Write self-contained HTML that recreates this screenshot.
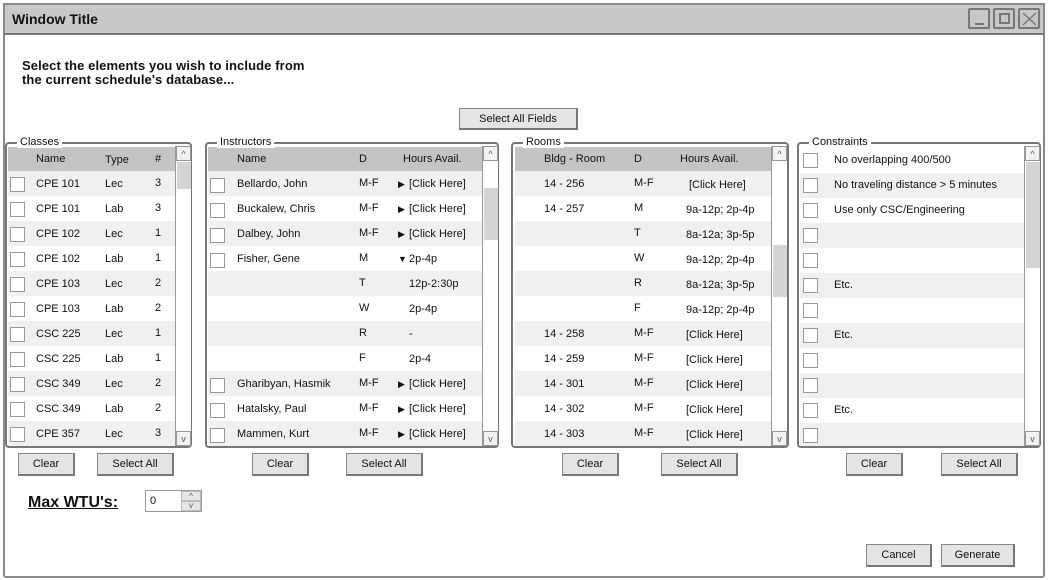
<!DOCTYPE html>
<html><head><meta charset="utf-8"><style>
*{box-sizing:border-box;margin:0;padding:0}
body{width:1050px;height:580px;background:#fff;font-family:"Liberation Sans",Arial,sans-serif;font-size:11px;color:#111;position:relative;overflow:hidden}
.a{position:absolute}
.win{left:3px;top:3px;width:1042px;height:575px;border:2px solid #8a8a8a;border-radius:3px}
.tb{left:3px;top:3px;width:1042px;height:32px;background:#c8c8c8;border:2px solid #8a8a8a;border-bottom:2px solid #777}
.btn{position:absolute;background:#e4e4e4;border:1px solid #888;border-right:2px solid #777;border-bottom:2px solid #777;text-align:center;line-height:20px;font-size:11px}
.box{position:absolute;border:2px solid #777;border-radius:4px}
.leg{position:absolute;background:#fff;padding:0 3px;font-size:11px;line-height:12px}
.sb{position:absolute;width:16px;background:#fff;border-left:1px solid #999}
.sbb{position:absolute;width:15px;height:15px;border:1px solid #999;background:#f2f2f2;left:0;font-size:9px;text-align:center;line-height:14px;color:#555}
.th{position:absolute;width:14px;left:1px;background:#d4d4d4}
.cb{position:absolute;width:15px;height:15px;border:1px solid #999;background:#fff}
.t{position:absolute;white-space:nowrap}
.tri{font-size:9px}
</style></head><body>
<div class="a win"></div>
<div class="a tb"></div>
<div class="t" style="left:12px;top:11px;font-weight:bold;font-size:14px">Window Title</div>
<div class="a" style="left:968px;top:8px;width:22px;height:21px;border:2px solid #777;border-radius:2px"><div class="a" style="left:5px;top:13px;width:9px;height:2px;background:#777"></div></div>
<div class="a" style="left:993px;top:8px;width:22px;height:21px;border:2px solid #777;border-radius:2px"><div class="a" style="left:4px;top:3px;width:11px;height:11px;border:2px solid #777"></div></div>
<div class="a" style="left:1018px;top:8px;width:22px;height:21px;border:2px solid #777;border-radius:2px"><svg class="a" style="left:2px;top:2px" width="15" height="14"><path d="M1 1L14 13M14 1L1 13" stroke="#777" stroke-width="1.5"/></svg></div>
<div class="t" style="left:22px;top:59px;font-weight:bold;font-size:13px;line-height:14px;letter-spacing:.1px">Select the elements you wish to include from<br>the current schedule's database...</div>
<div class="btn" style="left:459px;top:108px;width:119px;height:22px">Select All Fields</div>
<div id="root"></div>
<div class="t" style="left:28px;top:494px;font-weight:bold;font-size:16px;text-decoration:underline">Max WTU's:</div>
<div class="a" style="left:145px;top:490px;width:57px;height:22px;border:1px solid #999;background:#fff"></div>
<div class="t" style="left:150px;top:495px">0</div>
<div class="a" style="left:181px;top:491px;width:20px;height:10px;background:#e6e6e6;border:1px solid #bbb;font-size:8px;text-align:center;line-height:9px;color:#555">^</div>
<div class="a" style="left:181px;top:501px;width:20px;height:10px;background:#e6e6e6;border:1px solid #bbb;font-size:8px;text-align:center;line-height:8px;color:#555">v</div>
<div class="btn" style="left:866px;top:544px;width:66px;height:23px">Cancel</div>
<div class="btn" style="left:941px;top:544px;width:74px;height:23px">Generate</div>
<script>
var R=document.getElementById('root'),h='';
function box(x,y,w,hh,leg){h+='<div class="box" style="left:'+x+'px;top:'+y+'px;width:'+w+'px;height:'+hh+'px"></div><div class="leg" style="left:'+(x+12)+'px;top:'+(y-6)+'px">'+leg+'</div>';}
function sb(x,y,hh,ty,th){h+='<div class="sb" style="left:'+x+'px;top:'+y+'px;height:'+hh+'px"><div class="th" style="top:'+ty+'px;height:'+th+'px"></div><div class="sbb" style="top:0">^</div><div class="sbb" style="top:'+(hh-15)+'px">v</div></div>';}
function txt(x,y,s){h+='<div class="t" style="left:'+x+'px;top:'+y+'px">'+s+'</div>';}
function rows(x0,x1,y0,n,first){for(var i=0;i<n;i++){var bg=((i%2==0)==first)?'#f0f0f0':'#fff';h+='<div class="a" style="left:'+x0+'px;top:'+(y0+i*25)+'px;width:'+(x1-x0)+'px;height:25px;background:'+bg+'"></div>';}}
function cb(x,y){h+='<div class="cb" style="left:'+x+'px;top:'+y+'px"></div>';}
rows(8,175,171,11,true);
h+='<div class="a" style="left:8px;top:147px;width:167px;height:24px;background:#c4c4c4"></div>';
box(5,142,187,306,'Classes');
txt(36,153,'Name');txt(105,154,'Type');txt(155,153,'#');
var C=[['CPE 101','Lec',3],['CPE 101','Lab',3],['CPE 102','Lec',1],['CPE 102','Lab',1],['CPE 103','Lec',2],['CPE 103','Lab',2],['CSC 225','Lec',1],['CSC 225','Lab',1],['CSC 349','Lec',2],['CSC 349','Lab',2],['CPE 357','Lec',3]];
C.forEach(function(r,i){var y=171+i*25;cb(10,y+6);txt(36,y+7,r[0]);txt(105,y+7,r[1]);txt(155,y+6,r[2]);});
sb(175,146,300,16,27);
rows(208,482,171,11,true);
h+='<div class="a" style="left:208px;top:147px;width:274px;height:24px;background:#c4c4c4"></div>';
box(205,142,294,306,'Instructors');
txt(237,153,'Name');txt(359,153,'D');txt(403,153,'Hours Avail.');
var I=[['Bellardo, John','M-F','&#9654;','[Click Here]'],['Buckalew, Chris','M-F','&#9654;','[Click Here]'],['Dalbey, John','M-F','&#9654;','[Click Here]'],['Fisher, Gene','M','&#9660;','2p-4p'],['','T','','12p-2:30p'],['','W','','2p-4p'],['','R','','-'],['','F','','2p-4'],['Gharibyan, Hasmik','M-F','&#9654;','[Click Here]'],['Hatalsky, Paul','M-F','&#9654;','[Click Here]'],['Mammen, Kurt','M-F','&#9654;','[Click Here]']];
I.forEach(function(r,i){var y=171+i*25;if(r[0]){cb(210,y+7);txt(237,y+7,r[0]);}txt(359,y+6,r[1]);if(r[2])h+='<div class="t tri" style="left:398px;top:'+(y+8)+'px">'+r[2]+'</div>';txt(409,y+7,r[3]);});
sb(482,146,300,42,52);
rows(515,771,171,11,true);
h+='<div class="a" style="left:515px;top:147px;width:256px;height:24px;background:#c4c4c4"></div>';
box(511,142,278,306,'Rooms');
txt(544,153,'Bldg - Room');txt(634,153,'D');txt(680,153,'Hours Avail.');
var Rm=[['14 - 256','M-F','[Click Here]',689],['14 - 257','M','9a-12p; 2p-4p',686],['','T','8a-12a; 3p-5p',686],['','W','9a-12p; 2p-4p',686],['','R','8a-12a; 3p-5p',686],['','F','9a-12p; 2p-4p',686],['14 - 258','M-F','[Click Here]',686],['14 - 259','M-F','[Click Here]',686],['14 - 301','M-F','[Click Here]',686],['14 - 302','M-F','[Click Here]',686],['14 - 303','M-F','[Click Here]',686]];
Rm.forEach(function(r,i){var y=171+i*25;txt(544,y+7,r[0]);txt(634,y+6,r[1]);txt(r[3],y+8,r[2]);});
sb(771,146,300,99,52);
rows(800,1024,148,12,false);
box(797,142,244,306,'Constraints');
var K=['No overlapping 400/500','No traveling distance &gt; 5 minutes','Use only CSC/Engineering','','','Etc.','','Etc.','','','Etc.',''];
K.forEach(function(s,i){var y=148+i*25;cb(803,y+5);txt(834,y+6,s);});
sb(1024,146,300,16,106);
[[18,57,'Clear'],[97,77,'Select All'],[252,57,'Clear'],[346,77,'Select All'],[562,57,'Clear'],[661,77,'Select All'],[846,57,'Clear'],[941,77,'Select All']].forEach(function(b){h+='<div class="btn" style="left:'+b[0]+'px;top:453px;width:'+b[1]+'px;height:23px">'+b[2]+'</div>';});
R.innerHTML=h;
</script>
</body></html>
